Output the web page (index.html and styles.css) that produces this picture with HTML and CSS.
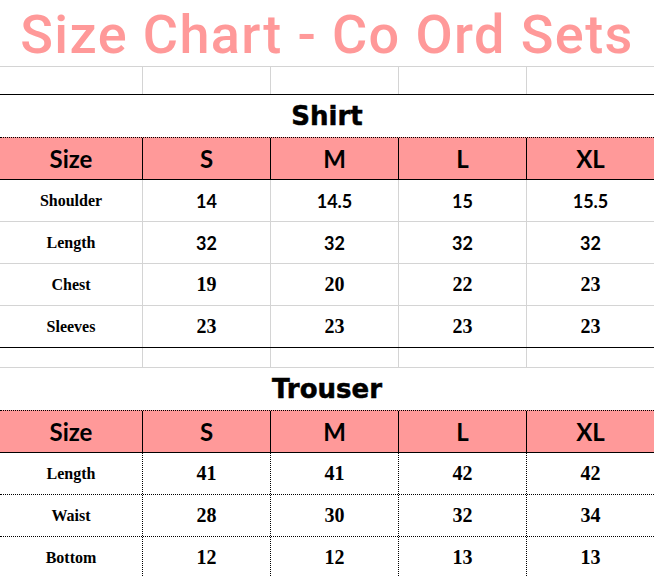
FILE: index.html
```html
<!DOCTYPE html>
<html>
<head>
<meta charset="utf-8">
<link rel="stylesheet" href="styles.css">
</head>
<body>
<div class="sheet">
  <div class="row title-row"><h1 class="title">Size Chart - Co Ord Sets</h1></div>
  <div class="row spacer-row line-black">
    <div class="cell"></div><div class="cell"></div><div class="cell"></div><div class="cell"></div><div class="cell"></div>
  </div>
  <div class="row section-row"><h2 class="section">Shirt</h2></div>
  <div class="row head-row">
    <div class="cell">Size</div><div class="cell">S</div><div class="cell">M</div><div class="cell">L</div><div class="cell">XL</div>
  </div>
  <div class="row body-row grey">
    <div class="cell label">Shoulder</div><div class="cell num-sans">14</div><div class="cell num-sans">14.5</div><div class="cell num-sans">15</div><div class="cell num-sans">15.5</div>
  </div>
  <div class="row body-row grey">
    <div class="cell label">Length</div><div class="cell num-sans">32</div><div class="cell num-sans">32</div><div class="cell num-sans">32</div><div class="cell num-sans">32</div>
  </div>
  <div class="row body-row grey">
    <div class="cell label">Chest</div><div class="cell num-serif">19</div><div class="cell num-serif">20</div><div class="cell num-serif">22</div><div class="cell num-serif">23</div>
  </div>
  <div class="row body-row grey line-black">
    <div class="cell label">Sleeves</div><div class="cell num-serif">23</div><div class="cell num-serif">23</div><div class="cell num-serif">23</div><div class="cell num-serif">23</div>
  </div>
  <div class="row gap-row">
    <div class="cell"></div><div class="cell"></div><div class="cell"></div><div class="cell"></div><div class="cell"></div>
  </div>
  <div class="row section-row"><h2 class="section">Trouser</h2></div>
  <div class="row head-row">
    <div class="cell">Size</div><div class="cell">S</div><div class="cell">M</div><div class="cell">L</div><div class="cell">XL</div>
  </div>
  <div class="row body-row dotted">
    <div class="cell label">Length</div><div class="cell num-serif">41</div><div class="cell num-serif">41</div><div class="cell num-serif">42</div><div class="cell num-serif">42</div>
  </div>
  <div class="row body-row dotted">
    <div class="cell label">Waist</div><div class="cell num-serif">28</div><div class="cell num-serif">30</div><div class="cell num-serif">32</div><div class="cell num-serif">34</div>
  </div>
  <div class="row body-row dotted">
    <div class="cell label">Bottom</div><div class="cell num-serif">12</div><div class="cell num-serif">12</div><div class="cell num-serif">13</div><div class="cell num-serif">13</div>
  </div>
</div>
</body>
</html>
```

FILE: styles.css
```css
* { box-sizing: border-box; }
html, body { margin: 0; padding: 0; background: #ffffff; }
body { width: 654px; height: 576px; overflow: hidden; }

.sheet { display: flex; flex-direction: column; width: 654px; }

.row { display: flex; width: 654px; border-bottom: 1px solid #d4d4d4; }
.row.line-black { border-bottom-color: #000000; }

.cell {
  display: flex; align-items: center; justify-content: center;
  width: 128px; flex: none;
  border-right: 1px solid #d4d4d4;
  color: #000;
}
.cell:first-child { width: 143px; }
.cell:last-child { width: 127px; border-right: none; }

.title-row { height: 67px; justify-content: center; align-items: center; }
.title {
  margin: 0; padding-top: 3px;
  font-family: "Roboto", "Liberation Sans", sans-serif;
  font-weight: 500; font-size: 54px; line-height: 1;
  color: #ff9999; letter-spacing: 1.4px; white-space: nowrap;
}

.spacer-row { height: 28px; }
.gap-row { height: 20px; }

.section-row { height: 42px; justify-content: center; align-items: center; border-bottom: none; }
.section {
  margin: 0;
  font-family: "DejaVu Sans", "Liberation Sans", sans-serif;
  font-weight: bold; font-size: 26px; line-height: 1; color: #000;
  -webkit-text-stroke: 0.5px #000;
}

.head-row {
  height: 43px; background: #ff9999;
  border-top: 1px dotted #000; border-bottom: 1px solid #000;
}
.head-row .cell {
  border-right-color: #000;
  font-family: "Lato", "Open Sans", sans-serif;
  font-weight: bold; font-size: 24px;
}

.body-row { height: 42px; }
.body-row.dotted { border-bottom: 1px dotted #000; }
.body-row.dotted .cell { border-right: 1px dotted #000; }
.body-row.dotted .cell:last-child { border-right: none; }

.label {
  font-family: "Liberation Serif", serif;
  font-weight: bold; font-size: 16px;
}
.num-sans {
  font-family: "Lato", "Open Sans", sans-serif;
  font-weight: bold; font-size: 18px;
}
.num-serif {
  font-family: "Liberation Serif", serif;
  font-weight: bold; font-size: 20px;
}
```
